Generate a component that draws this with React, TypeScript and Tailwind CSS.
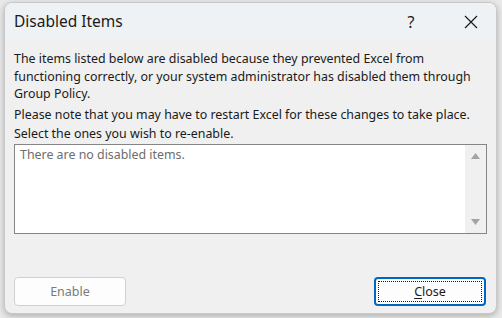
export default function App() {
  return (
    <div
      className="w-[502px] h-[318px] bg-[#e9e9e9] pl-[4px] pt-[2px] overflow-hidden"
      style={{ fontFamily: '"Noto Sans", "Open Sans", sans-serif' }}
    >
      <div className="w-[493px] h-[312px] rounded-[8px] bg-[#f0f0f0] border border-[#c8c8c8] shadow-[0_2px_6px_rgba(0,0,0,0.25)] overflow-hidden flex flex-col">
        {/* title bar */}
        <div className="h-[37px] bg-[#eef2f5] flex items-center pl-[9px] shrink-0">
          <div className="text-[15.5px] text-[#1a1a1a] flex-1">Disabled Items</div>
          <div className="w-[40px] text-center text-[16px] text-[#1a1a1a] mr-[20px]">?</div>
          <div className="w-[40px] flex justify-center mr-[5px]">
            <svg width="14" height="14" viewBox="0 0 14 14">
              <path d="M1 1 L13 13 M13 1 L1 13" stroke="#1a1a1a" strokeWidth="1.2" fill="none" />
            </svg>
          </div>
        </div>

        {/* body */}
        <div className="flex-1 flex flex-col px-[9px] pt-[10px] text-[12.4px] text-[#1a1a1a] leading-[17.5px]">
          <p>
            The items listed below are disabled because they prevented Excel from functioning correctly, or your system administrator has disabled them through Group Policy.
          </p>
          <p className="mt-[3px]">Please note that you may have to restart Excel for these changes to take place.</p>
          <p className="mt-[2px]">Select the ones you wish to re-enable.</p>

          <div className="mt-[1px] h-[90px] border border-[#858585] bg-white flex">
            <div className="flex-1 px-[5px] pt-[1px] text-[#6d6d6d]">There are no disabled items.</div>
            <div className="w-[21px] bg-[#f0f0f0] flex flex-col items-center justify-between py-[8px]">
              <svg width="9" height="6" viewBox="0 0 9 6">
                <path d="M4.5 0 L9 6 L0 6 Z" fill="#a3a3a3" />
              </svg>
              <svg width="9" height="6" viewBox="0 0 9 6">
                <path d="M0 0 L9 0 L4.5 6 Z" fill="#a3a3a3" />
              </svg>
            </div>
          </div>

          <div className="mt-auto mb-[7px] flex justify-between">
            <button className="w-[112px] h-[29px] bg-[#fdfdfd] border border-[#d0d0d0] rounded-[4px] text-[12.5px] text-[#7a7a7a]">
              Enable
            </button>
            <button className="w-[112px] h-[29px] bg-[#fdfdfd] border-2 border-[#0067c0] rounded-[4px] p-[2px] mr-[1px]">
              <div className="w-full h-full border border-dotted border-[#1a1a1a] flex items-center justify-center text-[12.5px] text-[#1a1a1a]">
                <span>
                  <span className="underline underline-offset-2">C</span>lose
                </span>
              </div>
            </button>
          </div>
        </div>
      </div>
    </div>
  );
}
